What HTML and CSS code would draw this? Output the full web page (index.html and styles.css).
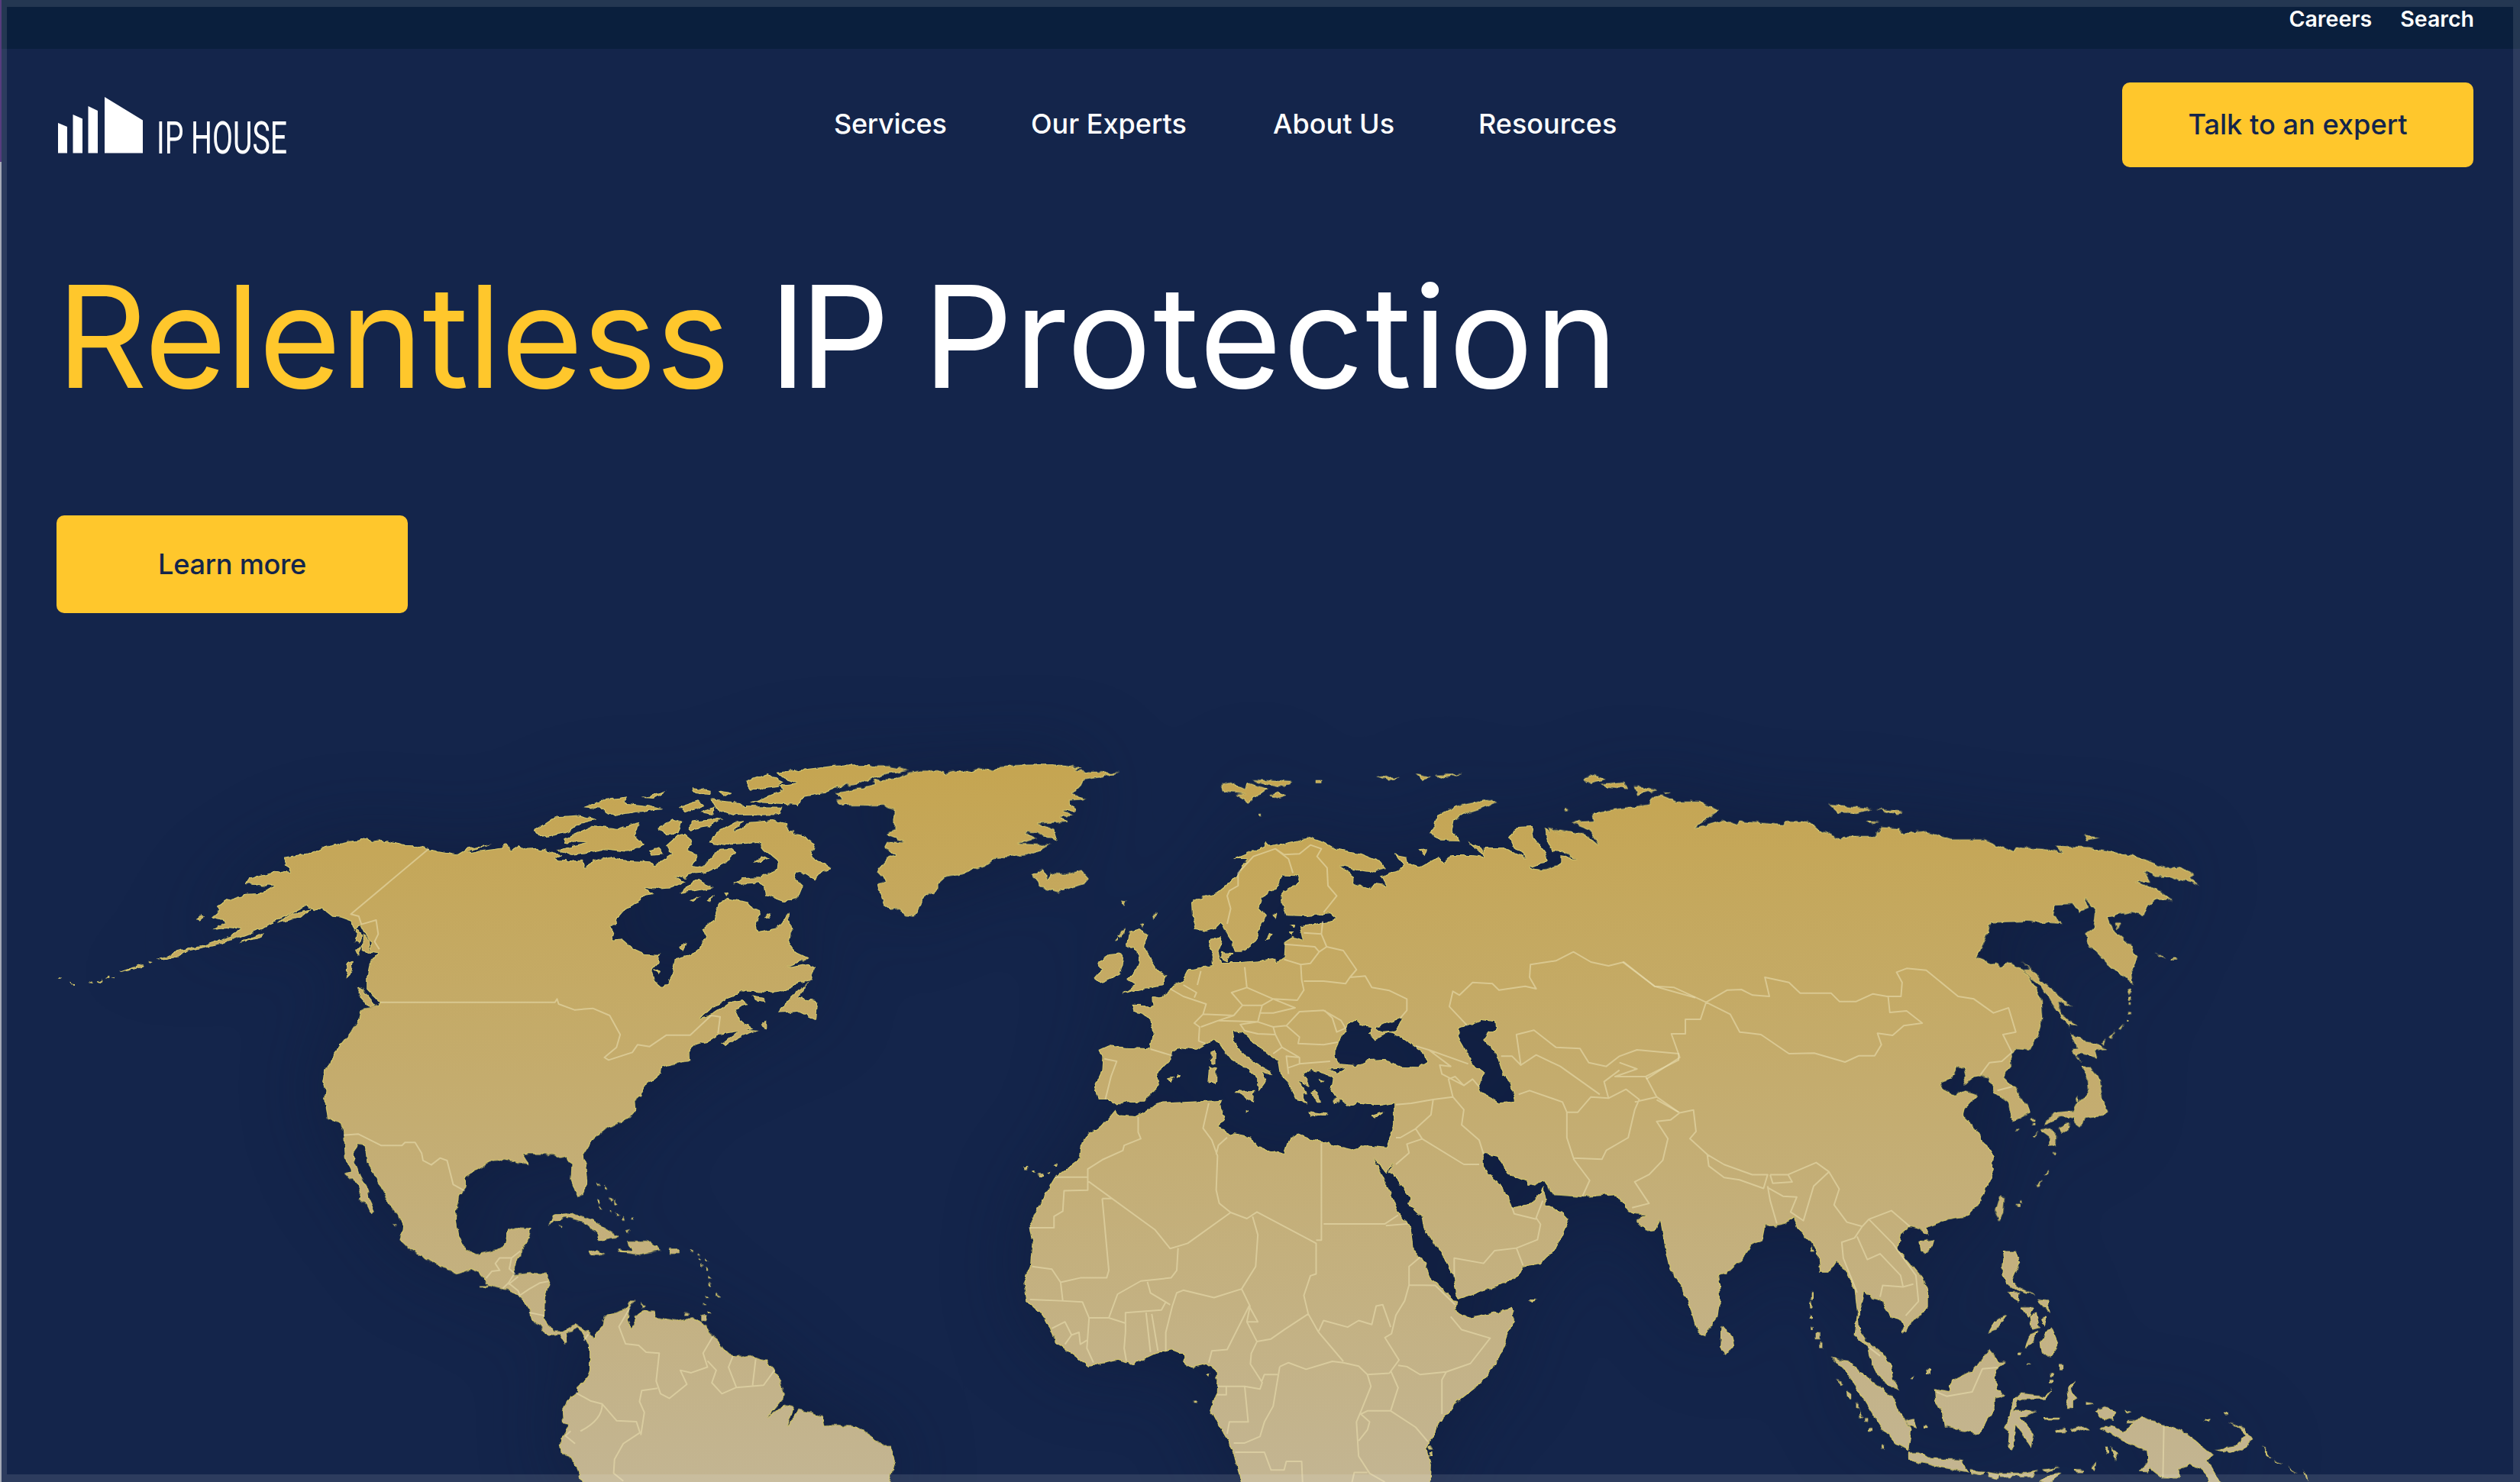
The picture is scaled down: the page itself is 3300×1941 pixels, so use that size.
FILE: index.html
```html
<!DOCTYPE html>
<html lang="en">
  <head>
    <meta charset="UTF-8" />
    <title>IP House</title>
    <meta name="viewport" content="width=device-width,initial-scale=1" />
    <link rel="stylesheet" href="styles.css">
  </head>
  <body>
    <div class="topbar">
      <a href="#">Careers</a>
      <a href="#">Search</a>
    </div>

    <header class="header">
      <a class="logo" href="#">
        <svg width="304" height="100" viewBox="74 113 304 100">
          <path d="M76 161l12 5v34.500h-12zM95.500 150l12.500 5.500v45h-12.500zM115.500 139l12.500 6v55.500h-12.500zM137 127l50 30.500v43h-50z" />
          <text x="205" y="200.500" textLength="171" lengthAdjust="spacingAndGlyphs">IP HOUSE</text>
        </svg>
      </a>
      <nav class="nav">
        <a class="services" href="#">Services</a>
        <a href="#">Our Experts</a>
        <a href="#">About Us</a>
        <a href="#">Resources</a>
      </nav>
      <a class="button talk" href="#">Talk to an expert</a>
    </header>

    <main>
      <section class="hero">
        <h1><span class="accent">Relentless</span> <span class="ip">IP</span> <span class="protection">Protection</span></h1>
        <a class="button learn" href="#">Learn more</a>
      </section>

      <svg class="map" width="3300" height="1071" viewBox="0 870 3300 1071">
        <defs>
          <linearGradient id="gold" gradientUnits="userSpaceOnUse" x1="0" y1="1000" x2="0" y2="1941">
            <stop offset="0" stop-color="#c5a551" />
            <stop offset="1" stop-color="#c3b592" />
          </linearGradient>
          <filter id="coast" filterUnits="userSpaceOnUse" x="0" y="870" width="3300" height="1100" color-interpolation-filters="sRGB">
            <feTurbulence type="fractalNoise" baseFrequency="0.1" numOctaves="2" seed="4" result="noise" />
            <feDisplacementMap in="SourceGraphic" in2="noise" scale="7" xChannelSelector="R" yChannelSelector="G" />
          </filter>
          <filter id="inner" filterUnits="userSpaceOnUse" x="0" y="870" width="3300" height="1100">
            <feMorphology operator="erode" radius="1" />
            <feGaussianBlur stdDeviation="0.7" />
          </filter>
          <filter id="glow" filterUnits="userSpaceOnUse" x="0" y="870" width="3300" height="1100" color-interpolation-filters="sRGB">
            <feGaussianBlur stdDeviation="55" />
          </filter>

          <g id="land" filter="url(#coast)">
            <!-- Alaska, Canada -->
            <g transform="translate(60 960) scale(.68878 .33333)">
              <path d="M452 488L500 472 540 440 575 425 600 420 612 408 620 425 640 420 660 430 680 440 700 442 728 452 745 465 765 472 782 478 800 455 850 435 800 470 865 452 876 432 885 460 900 440 912 455 935 452 960 468 980 478 968 495 975 502 1020 500 1028 528 1038 500 1070 482 1090 498 1150 505 1158 520 1190 478 1180 440 1200 405 1215 398 1228 420 1222 460 1240 480 1230 520 1250 525 1260 500 1280 455 1305 452 1310 470 1290 515 1255 550 1240 545 1215 570 1195 560 1215 585 1190 610 1160 615 1140 608 1155 630 1135 650 1100 700 1085 735 1082 760 1070 762 1082 785 1078 812 1095 808 1118 850 1140 870 1168 872 1165 905 1152 935 1158 975 1170 995 1180 990 1190 950 1198 885 1225 870 1245 835 1253 800 1248 768 1268 735 1275 690 1285 655 1300 650 1320 658 1335 665 1345 690 1360 700 1350 745 1355 780 1390 765 1412 705 1418 780 1415 830 1425 860 1450 885 1410 918 1450 905 1462 920 1455 970 1425 990 1400 1015 1375 1020 1320 1015 1295 1045 1265 1085 1242 1125 1270 1100 1300 1060 1325 1050 1335 1065 1310 1085 1320 1130 1345 1160 1325 1170 1280 1185 1265 1205 1235 1225 1222 1250 1222 1290 1190 1300 1172 1312 1170 1340 1150 1375 1140 1365 1118 1400 1115 1500 535 1500 530 1440 532 1400 528 1370 530 1330 542 1295 548 1255 572 1200 590 1150 602 1090 626 1095 632 1055 610 1010 610 960 615 910 632 865 615 860 618 830 600 760 585 775 580 740 560 725 545 722 525 690 510 700 495 680 450 725 415 765 370 800 325 835 270 860 215 890 250 855 300 835 350 800 368 770 345 765 315 772 340 745 315 725 330 700 325 680 345 655 378 632 410 630 435 600 380 595 385 570 435 542 465 548 458 520z" />
              <path d="M286 728l12-14 4 8-10 12zM440 750l25-40 40-20-20 35zM366 824l49-44-6 25-34 18zM210 890l40-27 12 3-42 28zM138 940l47-34 2 10-42 26zM111 964l10-8v10zM124 964l8-5v8zM96 974l10-7-4 14zM82 978l6-5v8zM46 980l10 5-3 7zM24 964h6v8zM193 896l10 4-5 5z" />
              <path d="M590 765l12 30-4 35-12-10zM604 790l10 25 2 50-14-10zM570 965l3-60 12-12-4 50zM592 995l12 15 15 40 8 20-12 8-18-40zM588 850l14-10-8 35z" />
              <path d="M928 385L970 328 1010 323 1048 343 1010 362 985 395 940 412zM985 415L1040 362 1090 375 1110 360 1130 350 1118 400 1138 440 1105 470 1060 460 1000 480 972 460 1030 432 985 430zM1020 292L1060 262 1105 250 1100 275 1145 285 1172 300 1120 312 1080 327 1060 300zM1133 252L1182 224 1155 255zM1163 375L1190 340 1210 350 1202 397 1180 402zM1226 350L1287 333 1262 368 1225 380zM1203 290L1240 265 1252 285 1215 313zM1228 212L1264 224 1264 244 1235 237zM1281 222L1306 235 1290 251zM1265 262L1320 273 1330 288 1402 290 1392 322 1310 325 1275 300zM1243 312L1272 292 1267 320zM1328 190L1370 158 1402 190 1392 212 1340 228zM1148 460L1165 448 1174 478 1152 482z" />
              <path d="M1388 155L1440 143 1500 128 1568 126 1568 177 1520 202 1480 237 1440 252 1430 282 1340 272 1370 250 1400 225 1395 205 1430 195 1400 177zM1503 240L1568 210V287L1515 267z" />
              <path d="M1262 430L1275 390 1310 350 1325 345 1310 385 1340 350 1380 342 1410 355 1410 380 1445 405 1460 440 1450 450 1462 490 1495 530 1475 545 1462 578 1430 540 1425 570 1440 600 1430 650 1405 665 1370 640 1365 605 1350 590 1308 595 1325 570 1355 568 1390 535 1392 505 1365 460 1355 432 1290 440zM1343 510L1360 483 1375 500zM1205 630L1238 570 1270 610zM1223 657l24-18-16 24zM1255 655l14-12-6 24zM1288 625l10 6-4 14zM1203 842l16-15-6 27zM1156 930h12l-4 18zM1366 722l14-17-6 30z" />
              <path d="M1392 1100L1415 1040 1450 975 1432 1040 1468 1055 1465 1130 1430 1095zM1340 1033l24 8 6 16-20-6zM1285 1222L1320 1165 1357 1170 1320 1197 1292 1230zM1357 1152l14-29v40zM1316 1128l20 22-14 0zM1120 1420l20-50-8 60z" />
            </g>
            <!-- the Americas -->
            <g transform="translate(380 1300) scale(.57398 .4088)">
              <path d="M205 40L165 52 155 90 130 140 105 185 98 220 80 260 75 290 85 315 82 350 85 405 110 415 122 440 125 530 140 570 125 580 150 610 160 640 157 660 175 680 185 710 193 700 180 660 178 630 160 585 148 545 145 505 155 485 170 488 175 545 195 590 210 630 225 675 245 710 257 750 248 790 270 820 305 850 350 880 380 902 410 888 430 900 455 940 490 952 518 968 530 985 548 1025 550 1050 575 1075 590 1100 612 1095 625 1125 635 1120 632 1090 655 1075 668 1090 675 1120 683 1130 683 1210 675 1240 655 1265 655 1280 635 1300 620 1340 622 1380 635 1385 628 1410 615 1430 620 1475 640 1490 655 1525 665 1568 670 1630H1350L1368 1568 1380 1500 1370 1450 1350 1450 1325 1420 1292 1390 1250 1385 1218 1385 1215 1360 1190 1345 1160 1335 1135 1388 1150 1328 1125 1320 1090 1360 1125 1300 1127 1280 1115 1235 1107 1210 1085 1180 1050 1162 1010 1165 990 1140 975 1110 955 1090 952 1070 918 1040 880 1050 835 1040 830 1020 805 1018 785 1035 787 1065 776 1075 770 1050 772 1010 787 990 775 990 765 1015 735 1028 715 1038 712 1065 692 1105 680 1085 650 1062 625 1085 600 1085 580 1040 582 970 593 930 585 900 550 898 512 903 510 885 520 850 540 800 552 755 515 752 497 760 490 805 470 825 425 838 400 822 385 775 378 720 385 655 400 625 402 590 435 562 460 540 490 535 520 545 545 550 530 517 600 518 615 530 630 525 642 550 640 600 655 655 668 650 678 605 675 560 668 520 690 470 725 430 775 400 790 375 788 345 800 330 815 285 840 265 850 235 910 220 908 190 920 165 960 150 970 130 900 40z" />
              <path d="M588 742L605 713 640 705 690 728 715 750 752 782 700 795 705 775 670 735 630 720zM746 822L780 828 768 795 815 795 847 825 795 840 750 832zM680 830L700 825 717 840 690 844zM864 823h24v14h-24zM612 748l10 0-4 7z" />
              <path d="M698 612l12 2-8 6zM718 615l6 14-6-2zM701 660l7 15-6 6zM703 685l6 12h-6zM729 655l8 12h-7zM739 665l8 14h-7zM731 697l7 7h-6zM745 706l7 9h-6zM756 716l8 12h-7zM764 762l12-4-8 9zM778 721h6v6h-6zM802 995l8 14h-8zM938 1034l14 2v16h-14zM898 1027h9v6h-9zM975 963l6 11h-7zM914 820l7 8h-6zM928 835l6 7h-6zM932 851l6 6h-6zM937 869l7 8h-6zM948 852l6 10h-6zM947 880l9 14h-8zM952 907l7 9h-7zM956 926l8 14h-8zM949 970l7 10h-7zM942 994l7 7h-7zM954 1020l6 8h-6zM432 936h20v6h-20zM233 738l10 10h-5z" />
            </g>
            <!-- Greenland, Iceland, Svalbard -->
            <g transform="translate(1050 970) scale(.44643 .33333)">
              <path d="M98 205L180 185 215 170 210 155 270 150 310 125 350 118 400 117 420 128 450 118 500 122 520 105 560 118 580 100 640 95 735 92 770 98 820 108 800 118 935 127 870 145 825 155 820 175 795 210 835 230 785 235 805 275 770 275 800 295 755 300 780 320 690 325 740 350 750 395 690 360 655 360 690 385 635 405 730 410 660 450 570 462 540 490 480 520 420 535 400 560 400 585 355 620 350 650 325 695 305 690 285 660 255 665 232 620 220 560 245 550 220 515 250 465 275 450 240 420 250 395 300 400 250 368 270 350 270 270 240 255 120 255 100 235 175 230 175 212 100 210z" />
              <path d="M0 112L50 118 90 100 250 100 315 115 250 130 160 170 80 185 0 220V140l60-10zM0 370l40 40-5 20-20 0 30 50 45 18-35 10-20 38-25-40L0 470z" />
              <path d="M675 530L705 505 720 540 730 520 780 525 820 508 842 540 825 565 755 595 700 580 690 550zM1228 172L1260 165 1300 190 1305 163 1367 190 1337 218 1310 246 1275 212 1305 210 1240 202zM1323 153L1442 162 1400 183 1340 168zM1370 212L1395 203 1420 217 1395 228zM1507 155h17v9h-17zM1342 288h9v9h-9zM934 630h17l-5 16zM1028 692l14-22-6 30zM994 727l10-10-2 16zM933 752l14-12-10 30zM920 788l14-24-6 26z" />
            </g>
            <!-- Europe and the Near East -->
            <g transform="translate(1320 1060) scale(.57398 .33333)">
              <path fill-rule="evenodd" d="M205 1140L198 1085 213 1030 215 975 208 945 230 928 270 935 325 940 330 880 325 830 305 805 288 795 285 770 330 772 328 740 345 745 370 710 375 690 395 680 410 630 440 620 468 612 468 580 458 550 460 515 482 495 490 520 480 560 488 600 530 600 570 595 605 585 612 600 630 580 632 520 650 500 672 515 665 460 720 445 748 430 735 412 680 420 635 418 625 370 622 330 650 300 668 280 660 262 625 260 618 300 580 345 572 390 590 420 575 460 565 520 535 560 518 560 510 520 495 480 485 445 470 470 448 482 428 465 420 420 418 365 440 345 475 330 520 265 545 195 515 195 580 150 590 125 600 145 650 125 690 110 722 130 750 155 800 170 850 205 862 230 830 248 780 235 757 222 790 265 790 290 825 312 835 290 865 298 850 265 890 240 900 215 880 175 912 185 915 215 940 228 985 185 995 210 1010 180 1060 180 1085 185 1085 150 1130 150 1185 190 1150 145 1143 110 1160 70 1195 65 1200 110 1225 170 1230 205 1192 230 1245 245 1262 205 1262 180 1298 200 1285 170 1240 165 1228 110 1225 70 1250 115 1300 105 1340 140 1568 200V1440H1150L1130 1400 1115 1365 1085 1355 1080 1375 1095 1440H880L877 1390 862 1330 880 1240 880 1155 850 1165 800 1150 775 1170 760 1145 735 1110 740 1060 725 1040 690 1020 675 1040 690 1090 665 1070 685 1120 672 1120 680 1160 655 1140 640 1075 620 1040 615 985 590 960 560 915 535 875 512 870 515 910 545 975 600 1030 605 1045 582 1035 587 1070 570 1110 570 1060 550 1025 510 985 485 930 470 905 430 945 390 935 375 950 370 990 340 1040 345 1085 325 1120 310 1148 270 1150 250 1165 232 1140zM780 835L800 830 800 848 828 858 822 880 835 905 870 880 900 900 950 960 955 990 935 1012 890 1010 860 980 820 985 795 1005 755 1000 745 965 755 910 770 875zM840 855L860 845 900 818 885 870 855 875zM1030 865L1080 828 1110 835 1112 865 1090 880 1082 900 1112 955 1128 1040 1145 1075 1157 1145 1120 1150 1080 1115 1075 1085 1090 1035 1060 1000 1040 930 1028 895zM730 1022L772 1018 750 1038z" />
              <path d="M260 725L290 690 272 670 285 640 300 600 295 560 270 535 275 480 300 468 320 495 310 540 325 585 345 640 362 650 355 690 310 705zM198 665L215 630 205 600 230 570 258 565 265 590 255 650 210 683zM253 492l14-22-8 36zM515 1108L562 1103 559 1152zM460 1010L475 1015 474 1077 457 1077zM462 955l12-10-1 54-9 0zM687 1186L732 1196 722 1207 690 1202zM825 1205L862 1186 837 1217zM360 1055l20-6-6 16zM385 1044h10v9h-10zM543 1178l8 8-8 4zM488 560l25 5-15 35-12-20zM588 515l8-30 8 5-10 25zM640 480l12 0-4 20zM603 413l13 0-4 15zM643 453h12l-4 14zM936 160l21-4-8 24zM963 87L983 20 1008 0 1055 0 1017 40 1012 85 1032 122 985 122zM1048 128l27 14 17 44-27-32zM690 1110l15 40 10 0-15-45zM710 1060l12 3-8 8zM745 1130h10v18l-10 10z" />
            </g>
            <!-- Africa and Arabia -->
            <g transform="translate(1320 1400) scale(.57398 .34503)">
              <path d="M245 155L255 175 290 180 345 130 400 125 490 118 485 140 495 190 480 220 510 245 555 260 570 295 630 322 640 270 660 245 690 265 720 280 785 305 815 290 862 298 880 300 877 355 865 402 835 340 870 455 890 540 920 610 925 690 945 715 965 790 1025 890 1018 915 1050 945 1140 915 1150 900 1155 945 1135 1040 1110 1130 1075 1200 1025 1265 1000 1320 980 1350 970 1400 955 1440 965 1500 963 1568 960 1640H540L530 1568 515 1450 490 1380 462 1295 475 1230 477 1150 455 1120 420 1135 405 1125 400 1085 375 1068 340 1078 285 1122 255 1105 185 1130 110 1040 95 980 70 920 42 880 35 810 50 750 55 660 48 600 75 500 105 415 165 340 170 280 185 240 215 215z" />
              <path d="M877 355L870 395 880 395 915 490 912 510 945 560 950 610 1000 730 1015 790 1025 875 1110 830 1165 785 1175 750 1215 740 1250 680 1265 630 1280 572 1262 540 1230 515 1222 450 1195 510 1150 525 1140 480 1115 430 1085 370 1085 325 880 300z" />
              <path d="M1115 325L1140 400 1200 440 1220 425 1240 470 1310 485 1385 475 1410 530H1568V200H1115z" />
              <path d="M1185 875h22l-9 14zM452 1160l9-8-3 22zM423 1259h8v11h-8zM37 371h7v10h-7zM54 389l8-6v11zM69 395h10v11h-10zM91 392l9-4-3 12zM103 368l7-10-2 14zM961 1430h7v15h-7zM961 1455h7v17h-7z" />
            </g>
            <!-- Siberia, China -->
            <g transform="translate(1800 980) scale(.73342 .33333)">
              <path d="M360 440L340 410 323 400 310 310 340 345 320 320 375 335 400 380 385 320 350 290 390 285 388 255 440 235 490 220 495 190 515 188 540 210 580 210 615 245 570 315 620 280 645 298 650 287 730 300 732 285 775 288 795 320 833 358 840 345 895 345 905 310 940 315 940 335 980 325 1030 358 1090 358 1110 378 1140 408 1145 390 1195 395 1228 412 1215 382 1275 388 1360 425 1420 475 1440 465 1465 498 1455 510 1472 540 1420 505 1395 505 1375 485 1385 525 1362 525 1400 560 1425 597 1395 595 1380 620 1372 660 1350 645 1310 665 1318 715 1350 770 1360 825 1352 870 1355 930 1310 850 1275 770 1270 730 1283 710 1288 640 1268 585 1275 625 1258 640 1245 612 1215 615 1212 655 1228 690 1165 680 1100 685 1090 750 1075 820 1120 860 1130 840 1158 870 1170 900 1190 990 1192 1060 1185 1130 1170 1190 1145 1185 1135 1200 1137 1250 1122 1290 1145 1340 1170 1430 1140 1465 1130 1390 1105 1350 1098 1295 1080 1285 1050 1325 1055 1290 1052 1260 1040 1250 1030 1300 1010 1315 1015 1340 1035 1362 1055 1345 1075 1360 1060 1385 1050 1440 1075 1500H273V500z" />
              <path d="M98 330L110 290 125 250 150 225 200 203 219 212 202 228 152 262 134 295 137 335 154 364 120 352zM374 120L395 104 414 125 385 140zM403 140L446 132 453 160 415 152zM463 150L503 165 468 181zM813 222L887 240 862 255 828 252zM895 238L944 248 932 262zM876 285l26 5-20 7zM1265 343l32 7-26 12zM1394 802l22 26-13-9zM1423 827h10v6h-10zM3 110l42 4-20 13zM73 98l28 14-16 10zM110 105l48-5-35 18zM1322 688l10 0-6 24zM516 170l13 4-9 6zM339 235h7v9h-7z" />
            </g>
            <!-- Sakhalin, Japan -->
            <g transform="translate(2400 1150) scale(.33333)">
              <path d="M742 326L765 345 825 405 890 460 940 505 890 485 895 530 960 580 930 575 932 590 870 510 820 425 785 400 750 360 775 360zM932 605L985 640 1045 650 1078 675 1030 680 1040 710 975 690 955 700 985 720 960 710 938 672 962 670zM980 740L1010 740 1050 795 1055 830 1060 870 1078 915 1065 935 1030 940 990 945 970 980 950 965 945 940 895 935 840 970 835 960 870 920 945 915 955 885 990 860 1008 830 1005 795zM885 985L930 962 935 980 900 1005zM815 990L850 980 878 1010 878 1050 850 1055 850 1015zM950 872l14-19 0 26zM1159 438l14-5-5 26zM1160 468h11v11h-11zM1160 488h10v10h-10zM1158 526h11v9h-11zM1153 554h9v9h-9zM1123 592l19-20-12 28zM1084 622l24-24-14 31zM1058 647l14-14-8 24zM718 991l22-5-14 12zM783 943h10v11h-10zM783 960h10v11h-10zM788 1012l16-16-8 22zM863 1082l12-9-3 18zM830 1162l16-20-8 26zM800 1206l22-18-16 28zM723 1280h12v9h-12zM736 1264h9v9h-9zM655 1250L675 1255 670 1310 655 1350 637 1310z" />
            </g>
            <!-- India, south-east Asia, Indonesia -->
            <g transform="translate(2000 1350) scale(.66964 .37691)">
              <path d="M0 100H790L800 200 830 228 850 215 880 225 855 270 852 300 875 330 888 375 905 410 912 440 910 500 895 560 880 610 860 645 825 655 780 685 785 715 770 690 748 682 730 710 725 760 745 800 770 850 785 910 785 960 760 1000 735 1050 733 1010 712 995 690 935 670 925 660 908 655 950 648 1000 650 1040 665 1080 695 1120 712 1160 715 1210 728 1250 690 1215 675 1160 665 1095 640 1060 645 980 640 900 620 830 605 800 590 840 572 840 570 790 555 735 530 690 520 645 505 670 485 678 465 680 460 725 440 740 420 795 390 845 375 850 378 920 372 1000 345 1062 330 1035 318 960 300 885 280 830 268 740 260 660 250 695 235 698 213 660 230 640 205 635 190 610 172 568 110 578 50 570 30 520 0 535z" />
              <path d="M380 1020L400 1060 405 1095 390 1125 378 1105zM765 735L795 725 790 755 780 775 768 760zM595 1135L630 1150 680 1225 720 1280 730 1330 752 1385 745 1460 720 1435 690 1375 650 1260 625 1190z" />
              <path d="M745 1465L765 1465 790 1485 850 1490 865 1535 800 1515 745 1490zM797 1245L825 1255 830 1215 870 1180 905 1105 920 1150 935 1150 915 1180 920 1245 935 1270 915 1280 915 1320 900 1350 885 1405 815 1375 810 1320 800 1300zM950 1280L965 1262 1010 1270 1025 1245 1015 1280 960 1282 952 1320 995 1320 965 1345 990 1400 985 1450 965 1395 955 1370 950 1455 940 1450 942 1390 932 1380 945 1330z" />
              <path d="M1110 1325L1130 1305 1152 1325 1145 1352 1120 1345zM1120 1380L1145 1370 1165 1392 1200 1340 1245 1368 1280 1390 1310 1430 1340 1475 1330 1490 1355 1568 1370 1600H1345L1320 1530 1295 1505 1275 1530 1275 1555 1240 1555 1215 1520 1210 1460 1155 1415zM1197 1532l17-34 2 36zM1343 1455L1385 1443 1405 1408 1417 1420 1402 1452 1375 1470zM1370 1361l33 20 15 38-10-4-12-30zM1438 1438l18 50-11-14zM1460 1488l18 18-10-4zM1488 1513l19 25-16-15zM1518 1528l12 35-8-12zM1324 1349h13v8h-13zM1365 1326h7v9h-7z" />
              <path d="M930 765L955 766 964 800 947 870 967 895 994 922 960 902 938 880 926 825 933 800zM940 908l21 0-2 37zM966 958l24 0-10 40zM996 933l21 5 6 40-17-27zM983 988l13-12 6 56-15 7zM1003 998l13-10-6 37zM973 1107l8-49 19-14-12 41zM1003 1080L1025 1028 1040 1090 1022 1138 1006 1115zM901 1047L913 1010 937 988 920 1032zM1041 1158h6v24h-6zM1024 1190h6v11h-6zM1023 1213h6v11h-6zM778 1178h9v15h-9zM747 1209l8-9v11zM740 1355L755 1348 762 1382 748 1372zM775 1370h8v15h-8zM625 1250l10 12v18h-7zM605 1212l13 12-5 4zM643 1296h6v15h-6zM648 1318l10 26-7-4zM659 1348h6v13h-6zM669 1380h6v10h-6zM693 1443h6v9h-6z" />
              <path d="M1056 1242l15-26-8 36 13 25-10 7 0 32-12 0 4-38zM1094 1290l16 5-16 5zM1011 1342h30v9h-30zM1037 1383h14v15h-14zM1060 1384l22-12 20 19-14 0-10-7-14 7zM1168 1318l14 6-10 6zM1171 1353h18v8h-18zM1143 1448l11 22-4 22zM1131 1448h6v18h-6zM1103 1517l10-20-4 34zM867 1526l28 4-4 15-23-7zM898 1533l26 7-4 17-18-7zM922 1536l53 0 24-8-14 20-60 2zM1008 1524l34-7-26 19zM1000 1568L1020 1545 1045 1535 1025 1568zM1069 1526h18v8h-18zM979 1153l5 8h-6zM959 1118h8v9h-8zM555 905h5v30h-5zM553 943h5v24h-5zM552 985h5v14h-5zM556 1028h5v14h-5zM564 1050h6v22h-6zM571 1083h6v22h-6zM554 745l6 22h-5z" />
            </g>
          </g>

          <mask id="landMask" maskUnits="userSpaceOnUse" x="0" y="870" width="3300" height="1100">
            <g filter="url(#inner)"><use href="#land" fill="#fff" /></g>
          </mask>
        </defs>

        <g filter="url(#glow)" opacity=".6"><use href="#land" fill="#0f1b3a" /></g>
        <use href="#land" fill="#d0c46b" />
        <rect x="0" y="870" width="3300" height="1100" fill="url(#gold)" mask="url(#landMask)" />

        <g class="borders">
          <g transform="translate(60 960) scale(.68878 .33333)">
            <path d="M728 455L580 712 595 720 600 752 628 735 632 790 625 820 634 850M636 1058H968L972 1045 975 1065 1005 1088 1040 1082 1072 1110 1092 1185 1085 1235 1062 1275 1070 1285 1115 1255 1125 1225 1148 1232 1180 1187 1225 1187 1265 1110 1282 1115 1278 1180" />
          </g>
          <g transform="translate(380 1300) scale(.57398 .4088)">
            <path d="M122 457L155 453 208 490 255 490 262 480 285 480 300 515 303 538 322 552 342 530 358 538 372 615 398 635M447 915L460 893 478 890 468 868 478 850 505 850 525 828M505 850L500 885 512 900 498 930 485 948M498 930L520 955 524 970 545 950 570 930 590 925M498 935L520 910M545 1025L580 1035M670 1115L680 1095M775 1010L750 1070 765 1125 795 1130 812 1152 842 1155 835 1245 845 1285 865 1300 905 1255 890 1210 915 1218 952 1200 942 1155 965 1100M952 1180L972 1210 962 1250 985 1285 1018 1265 1080 1258 1105 1210M1018 1265L1000 1200 1010 1165M1055 1258L1062 1175M838 1268L802 1275 797 1310 808 1345 800 1418M652 1282L685 1308 712 1318 745 1372 790 1375 798 1410 760 1445 740 1495 738 1540 760 1565M712 1318Q712 1370 662 1405M650 1445L628 1420 640 1405" />
          </g>
          <g transform="translate(1320 1060) scale(.57398 .33333)">
            <path d="M220 980L248 990 235 1050 222 1140M325 942L375 968M370 705L400 735 452 765 445 805 425 840 437 855 435 910 450 920M445 805L515 810 535 770 510 720 545 700 540 620M545 700L605 745 580 770 535 770M580 770L575 800 605 800 655 780 605 745 660 750 675 710 670 670 668 610 630 590M515 810L480 830 440 855M480 830L570 835 605 855 635 850 665 795 720 790 760 830 770 860 750 875 740 820 722 790M575 800L570 835 530 845 540 870 570 882 610 885 605 855M635 850L665 895 662 920 720 925 752 915M610 885L625 935 665 975 665 1000 735 990M625 935L605 960M665 975L635 970 640 1040M665 1000L640 1015M632 530L700 540 710 560 690 605 668 610M710 560L727 540 715 490 675 485M715 490L718 440M727 540L765 555 795 630 780 660 770 685 720 675 675 675M780 660L815 655 830 700 870 712 910 745 910 790 895 820M720 405L750 340 730 300 728 230 705 185 715 155 690 140 665 175 630 178 610 155 560 185 525 250 525 300 505 320 500 340 508 390 500 450M610 155L640 195 650 250M400 690L430 720 425 740M432 690L440 635" />
            <path d="M930 930L960 945 1050 1000M960 945L1010 1010 985 1005 990 1040 1040 1085 1020 1050 1005 1060 1015 1130 970 1140 920 1155 885 1160M1040 1085L1060 1060 1075 1090M1015 1130L1040 1180 1035 1240 1075 1300 1085 1355M970 1140L965 1200 930 1255 895 1290 885 1290M930 1255L945 1295 1040 1395 1075 1395M945 1295L910 1315 915 1350 885 1395M1048 850L1007 775 1015 715 1030 730 1060 680 1105 685 1120 710 1180 695 1205 705 1190 660 1192 610 1250 595 1290 560 1330 600 1370 615 1405 600 1475 695 1568 740M1125 970L1150 970 1170 1005 1160 885 1200 868 1250 935 1305 940 1325 995 1365 1010 1395 970 1435 945 1530 960 1530 985 1455 1050 1385 1050 1435 1020 1395 995M1170 1005L1205 965 1260 1010 1350 1120M1275 1190L1265 1150 1190 1105 1165 1120M1275 1190L1300 1190 1330 1130 1370 1135 1410 1100 1440 1140 1430 1180 1415 1290 1365 1340 1355 1375 1290 1370 1275 1290 1275 1190M1370 1135L1360 1070 1395 1025M1455 1050L1480 1130 1430 1150M1480 1130L1530 1190" />
          </g>
          <g transform="translate(1320 1400) scale(.57398 .34503)">
            <path d="M297 182V240L303 265 265 290 262 310 215 345 182 380V460L128 462 125 540 105 560V603H48M108 411H182M182 425L335 610 370 682 410 662 508 545 482 510 475 460 478 330 465 270 445 225 458 130M215 492H238M215 492L230 765 225 793H165L120 810 100 760 55 750M475 325L480 290 500 260M508 545L545 568 568 543 703 662V778L690 785 675 860 685 930 708 998 765 1110M715 282V650H703M720 588H860L890 555M862 595L912 588M558 560L570 630 565 750 533 835 470 868 400 840 385 850 375 900 360 1000V1070M388 680L385 765 372 793 303 805 250 855 230 945 185 945 170 885 120 880 50 875M120 810L125 880M318 808L325 850 370 895M360 885L350 915 268 925V1000L265 1060 270 1108M315 925L325 1075M328 930L342 1070M230 945L268 965M185 945L180 1060 195 1115M100 985L130 960 145 1010 162 1000 165 1045 180 1030M130 1045L145 1010M533 835L552 900 545 960 568 1035 555 1080 553 1120 580 1190 575 1215 540 1205H477M545 960H570L550 900 500 1065 465 1070 458 1115M568 1035L600 1025 630 990 685 930M620 1130L640 1115 680 1140 740 1110 765 1115 800 1128 820 1160 870 1155 892 1105 860 1020 875 1005 885 935 905 880 915 820 975 822 1020 895M915 820V750L940 715M708 998L720 955 775 980 800 955 830 970 840 900 855 895 873 980M820 1160L828 1205 805 1300 795 1340 800 1470 825 1535 860 1568M873 1145L890 1210 873 1298H820L805 1310 825 1340 820 1370 800 1412M873 1298L930 1360 958 1415M890 1125L910 1130 940 1160 1000 1150 990 1180V1310M1000 1150L1055 1118 1100 1022 1035 990 1010 940M615 1160H585L578 1190M620 1130L605 1280 585 1340 575 1395 540 1420 515 1420M477 1237H498V1205M540 1205L548 1340 505 1340 500 1385M518 1455H585L600 1522H630L635 1490H670L672 1568M785 1568L790 1532H820M1018 790V718L1085 738 1110 690 1160 680 1208 648 1215 590 1205 565 1220 500M1150 525L1155 550 1205 570M1160 680L1175 745" />
          </g>
          <g transform="translate(1800 980) scale(.73342 .33333)">
            <path d="M443 840L500 935 535 940 592 998 630 950 655 948 675 970 705 975 697 900 740 920 760 962 815 962 830 995 860 995 890 965 915 975 940 975 942 920 932 880 950 865 985 872 1042 975 1070 985 1105 1040 1132 1020 1145 1115 1122 1125 1138 1195 1120 1230 1098 1235 1082 1282M592 998L635 1045 652 1115 690 1125 740 1200 785 1198 840 1233 865 1208 893 1208 905 1165 898 1120 925 1128 945 1090 978 1080 950 1032 920 1038 917 975M592 998L582 1065H555V1122H530L545 1215 485 1300M1112 1345L1138 1330" />
          </g>
          <g transform="translate(2000 1350) scale(.66964 .37691)">
            <path d="M253 240L298 285 325 275 330 350 318 375 352 430 385 465 440 500 470 500 462 548 415 518 385 510 355 470 352 430M298 285L280 310 253 315 275 375 265 450 238 500 210 525 238 600 205 615M90 445L122 520 108 575M470 540L475 590 488 670M470 545L500 575 527 578 515 630 540 660 560 540 590 490 610 550 600 605 625 665 655 680 640 720 615 735 618 790 645 910M475 500L510 500 518 525 480 530 475 500M510 500L565 458 590 490M655 680L668 655 712 625 748 680M668 655L715 740 760 850 765 940 740 990M645 715L665 795 690 775 730 850 735 890 695 885 690 925M735 890L755 880M800 1255L820 1270 870 1255 890 1175 920 1170M1245 1370L1243 1555M668 1100L690 1130" />
          </g>
        </g>
      </svg>
    </main>
  </body>
</html>
```
FILE: styles.css
```css
* {
  box-sizing: border-box;
}
body {
  margin: 0;
  width: 3300px;
  height: 1941px;
  overflow: hidden;
  position: relative;
  background: #14254b;
  color: #fff;
  font-family: Inter, "Liberation Sans", sans-serif;
}
/* translucent window frame */
body::after {
  content: "";
  position: absolute;
  inset: 0;
  border: 9px solid rgba(255, 255, 255, 0.11);
  border-bottom-width: 10px;
  pointer-events: none;
}
body::before {
  content: "";
  position: absolute;
  left: 0;
  top: 0;
  width: 2px;
  height: 1941px;
  background: linear-gradient(#43246f 212px, #9aa0ad 212px);
}
a {
  color: inherit;
  text-decoration: none;
  white-space: nowrap;
}
.topbar {
  display: flex;
  justify-content: flex-end;
  gap: 37px;
  height: 64px;
  padding: 8px 60px 0 0;
  background: #0a1f3d;
  font-size: 28.5px;
  line-height: 34px;
  font-weight: 600;
}
.header {
  display: flex;
  align-items: center;
  height: 198px;
  padding: 0 61px 0 74px;
}
.logo svg {
  display: block;
  fill: #fff;
}
.logo text {
  font: 400 60px Roboto, sans-serif;
}
.nav {
  display: grid;
  grid-template-columns: 258px 317px 269px auto;
  margin-left: 714px;
  padding-bottom: 2px;
  font-size: 36px;
  font-weight: 500;
}
.services {
  letter-spacing: -0.3px;
}
.button {
  display: flex;
  align-items: center;
  justify-content: center;
  width: 460px;
  border-radius: 10px;
  background: #ffc72c;
  color: #14254b;
  font-size: 36.2px;
  font-weight: 500;
}
.talk {
  height: 111px;
  margin-left: auto;
}
.learn {
  height: 128px;
  letter-spacing: -0.3px;
}
.hero {
  height: 608px;
  padding: 67px 74px 0;
}
h1 {
  margin: 0 0 122px;
  height: 224px;
  font-size: 185px;
  line-height: 224px;
  font-weight: 400;
  white-space: nowrap;
}
.accent {
  color: #ffc72c;
  letter-spacing: -1.4px;
}
.ip {
  letter-spacing: -9px;
}
.protection {
  letter-spacing: 1.9px;
}
.map {
  display: block;
}
.borders path {
  fill: none;
  stroke: #e8dcae;
  stroke-opacity: 0.6;
  stroke-width: 2px;
  stroke-linejoin: round;
  vector-effect: non-scaling-stroke;
}
```
